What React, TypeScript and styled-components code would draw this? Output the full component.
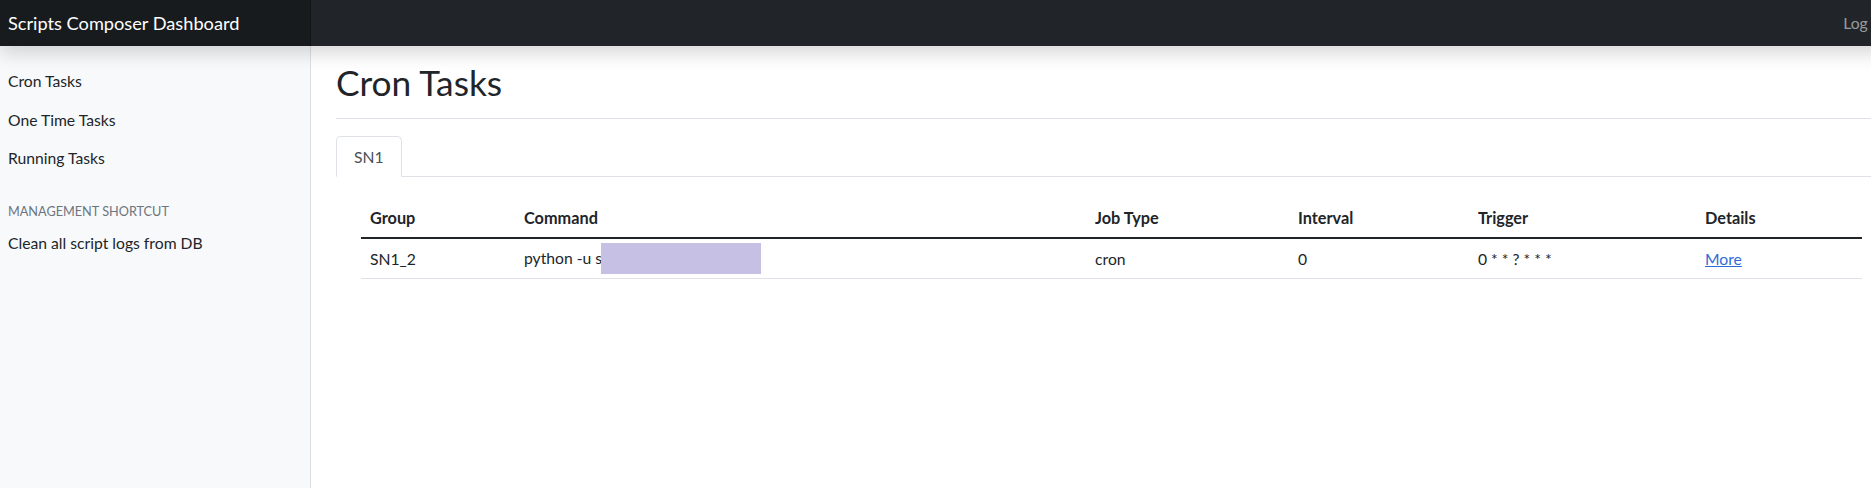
import React from "react";
import styled, { createGlobalStyle } from "styled-components";

const GlobalStyle = createGlobalStyle`
  html, body {
    margin: 0;
    padding: 0;
    overflow: hidden;
    background: #ffffff;
  }
  body {
    font-family: "Lato", "Segoe UI", sans-serif;
    color: #212529;
  }
  * { box-sizing: border-box; }
`;

const Page = styled.div`
  width: 1913px;
  height: 100vh;
  display: flex;
  flex-direction: column;
`;

const Navbar = styled.header`
  position: relative;
  z-index: 2;
  flex: 0 0 46px;
  height: 46px;
  display: flex;
  align-items: stretch;
  background: #212529;
  box-shadow: 0 8px 18px rgba(0, 0, 0, 0.15);
`;

const Brand = styled.a`
  width: 311px;
  flex: 0 0 311px;
  padding-left: 8px;
  display: flex;
  align-items: center;
  font-size: 18.2px;
  color: #ffffff;
  text-decoration: none;
  background: rgba(0, 0, 0, 0.25);
  box-shadow: inset -1px 0 0 rgba(0, 0, 0, 0.25);
  white-space: nowrap;
`;

const NavRight = styled.nav`
  margin-left: auto;
  display: flex;
  align-items: center;
  padding-right: 18px;
`;

const SignOut = styled.a`
  font-size: 15.7px;
  color: rgba(255, 255, 255, 0.55);
  text-decoration: none;
  white-space: nowrap;
`;

const Body = styled.div`
  flex: 1;
  display: flex;
  min-height: 0;
`;

const Sidebar = styled.aside`
  width: 311px;
  flex: 0 0 311px;
  background: #f8f9fa;
  box-shadow: inset -1px 0 0 rgba(0, 0, 0, 0.1);
  padding-top: 16px;
  display: flex;
  flex-direction: column;
`;

const SideLink = styled.a`
  display: block;
  padding: 8px 8px;
  line-height: 22.5px;
  font-size: 15.7px;
  color: #212529;
  text-decoration: none;
  white-space: nowrap;
`;

const SideHeading = styled.h6`
  margin: 24px 0 4px;
  padding: 0 8px;
  font-size: 12.7px;
  line-height: 18px;
  font-weight: 400;
  text-transform: uppercase;
  color: #6c757d;
`;

const Main = styled.main`
  flex: 1;
  min-width: 0;
  padding: 16px 26px 0 25px;
`;

const TitleBar = styled.div`
  border-bottom: 1px solid #dee2e6;
  padding-bottom: 14px;
`;

const Title = styled.h2`
  margin: 0;
  font-size: 35.3px;
  line-height: 1.2;
  font-weight: 400;
  color: #212529;
`;

const Tabs = styled.ul`
  list-style: none;
  margin: 17px 0 0;
  padding: 0;
  display: flex;
  border-bottom: 1px solid #dee2e6;
`;

const Tab = styled.li<{ $active?: boolean }>`
  margin-bottom: -1px;
  height: 41px;
  padding: 0 17px;
  display: flex;
  align-items: center;
  font-size: 15.7px;
  color: #495057;
  background: #ffffff;
  border: 1px solid ${(p) => (p.$active ? "#dee2e6" : "transparent")};
  border-bottom-color: ${(p) => (p.$active ? "#ffffff" : "transparent")};
  border-radius: 5px 5px 0 0;
`;

const TabPane = styled.section`
  padding: 21px 25px 0 25px;
`;

const Table = styled.table`
  width: 100%;
  table-layout: fixed;
  border-collapse: collapse;
  color: #212529;
`;

const HeadCell = styled.th`
  height: 40px;
  padding: 0 9px;
  text-align: left;
  vertical-align: middle;
  font-size: 16.3px;
  font-weight: 700;
  border-bottom: 2px solid #212529;
  white-space: nowrap;
`;

const Cell = styled.td`
  height: 40px;
  padding: 0 9px;
  vertical-align: middle;
  font-size: 15.7px;
  border-bottom: 1px solid #dee2e6;
  white-space: nowrap;
`;

const Redacted = styled.span`
  display: inline-block;
  width: 160px;
  height: 31px;
  margin: -10px 0 -6px -1px;
  vertical-align: middle;
  background: #c6c0e5;
`;

const MoreLink = styled.a`
  color: #2f6bd8;
  text-decoration: underline;
`;

const columns = [
  { key: "group", label: "Group", width: 154 },
  { key: "command", label: "Command", width: 571 },
  { key: "type", label: "Job Type", width: 203 },
  { key: "interval", label: "Interval", width: 180 },
  { key: "trigger", label: "Trigger", width: 227 },
  { key: "details", label: "Details", width: 166 },
];

const rows = [
  { group: "SN1_2", command: "python -u s", type: "cron", interval: "0", trigger: "0 * * ? * * *" },
];

export default function App() {
  return (
    <>
      <GlobalStyle />
      <Page>
        <Navbar>
          <Brand href="#">Scripts Composer Dashboard</Brand>
          <NavRight>
            <SignOut href="#">Log out</SignOut>
          </NavRight>
        </Navbar>
        <Body>
          <Sidebar>
            <SideLink href="#">Cron Tasks</SideLink>
            <SideLink href="#">One Time Tasks</SideLink>
            <SideLink href="#">Running Tasks</SideLink>
            <SideHeading>Management Shortcut</SideHeading>
            <SideLink href="#">Clean all script logs from DB</SideLink>
          </Sidebar>
          <Main>
            <TitleBar>
              <Title>Cron Tasks</Title>
            </TitleBar>
            <Tabs>
              <Tab $active>SN1</Tab>
            </Tabs>
            <TabPane>
              <Table>
                <colgroup>
                  {columns.map((c) => (
                    <col key={c.key} style={{ width: c.width }} />
                  ))}
                </colgroup>
                <thead>
                  <tr>
                    {columns.map((c) => (
                      <HeadCell key={c.key}>{c.label}</HeadCell>
                    ))}
                  </tr>
                </thead>
                <tbody>
                  {rows.map((r) => (
                    <tr key={r.group}>
                      <Cell>{r.group}</Cell>
                      <Cell>
                        {r.command}
                        <Redacted />
                      </Cell>
                      <Cell>{r.type}</Cell>
                      <Cell>{r.interval}</Cell>
                      <Cell>{r.trigger}</Cell>
                      <Cell>
                        <MoreLink href="#">More</MoreLink>
                      </Cell>
                    </tr>
                  ))}
                </tbody>
              </Table>
            </TabPane>
          </Main>
        </Body>
      </Page>
    </>
  );
}
